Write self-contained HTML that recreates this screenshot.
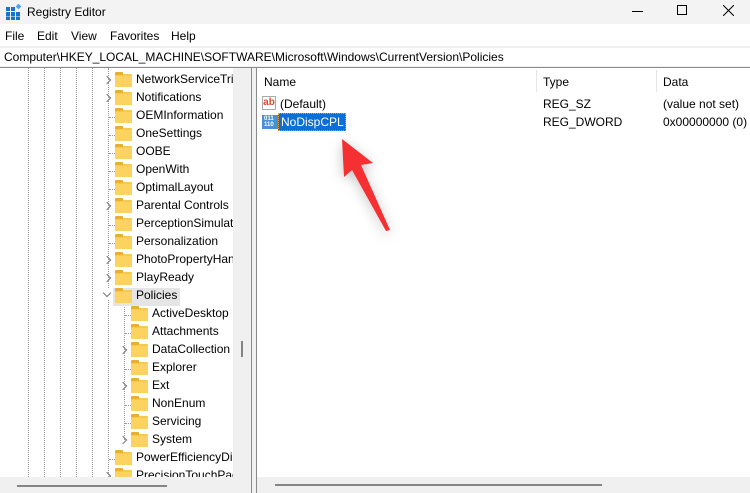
<!DOCTYPE html>
<html><head><style>
*{margin:0;padding:0;box-sizing:border-box}
body{width:750px;height:493px;overflow:hidden;background:#fff;font-family:"Liberation Sans",sans-serif;font-size:12px;color:#000;position:relative}
.abs{position:absolute}
.title{left:0;top:0;width:750px;height:24px;background:#f3f3f3}
.menu{left:0;top:24px;width:750px;height:22px;background:#fff}
.menu span{position:absolute;top:5px;font-size:12px}
.addr{left:0;top:46px;width:750px;height:22px;background:#f0f0f0;border-bottom:1px solid #8a8a8a}
.addrin{left:0;top:48px;width:750px;height:18px;background:#fff;font-size:12px;padding:2px 0 0 4px;white-space:nowrap}
.row{position:absolute;height:18px;white-space:nowrap;font-size:12px}
.fold{position:absolute;width:17px;height:13px;top:3px;background:#f8c94a;border-radius:1px}
.fold:before{content:"";position:absolute;left:0;top:-2px;width:8px;height:3px;background:#e8b02e;border-radius:1px 1px 0 0}
.fold:after{content:"";position:absolute;left:0;top:2px;width:17px;height:11px;background:#fbd35e}
.dv{position:absolute;top:68px;height:409px;width:0;border-left:1px dotted #999}
.ch{position:absolute;width:6px;height:6px;border-right:1.3px solid #777;border-bottom:1.3px solid #777;transform:rotate(-45deg)}
.hd{position:absolute;height:0;border-top:1px dotted #999}
#tw{position:absolute;left:0;top:0;width:233px;height:477px;overflow:hidden}
#ti{position:absolute;left:0;top:2px;width:233px;height:480px}
</style></head><body>
<div class="abs title"></div>
<svg class="abs" style="left:6px;top:4px" width="16" height="16" viewBox="0 0 16 16">
<g fill="#1a73c8"><rect x="0" y="3" width="4" height="4"/><rect x="5" y="3" width="4" height="4"/><rect x="0" y="8" width="4" height="4"/><rect x="5" y="8" width="4" height="4"/><rect x="10" y="8" width="4" height="4"/><rect x="0" y="12.5" width="4" height="3.5"/><rect x="5" y="12.5" width="4" height="3.5"/><rect x="10" y="12.5" width="4" height="3.5"/></g>
<rect x="10.5" y="0.5" width="4" height="4" fill="#4ba3f0" transform="rotate(45 12.5 2.5)"/></svg>
<div class="abs" style="left:27px;top:5px;font-size:12px">Registry Editor</div>
<div class="abs" style="left:632px;top:11px;width:11px;height:1px;background:#000"></div>
<div class="abs" style="left:677px;top:5px;width:10px;height:10px;border:1px solid #000"></div>
<svg class="abs" style="left:723px;top:5px" width="11" height="11"><path d="M0 0L11 11M11 0L0 11" stroke="#000" stroke-width="1"/></svg>
<div class="abs menu"><span style="left:5px">File</span><span style="left:37px">Edit</span><span style="left:71px">View</span><span style="left:110px">Favorites</span><span style="left:171px">Help</span></div>
<div class="abs addr"></div>
<div class="abs addrin">Computer\HKEY_LOCAL_MACHINE\SOFTWARE\Microsoft\Windows\CurrentVersion\Policies</div>
<div class="dv" style="left:28px"></div><div class="dv" style="left:44px"></div><div class="dv" style="left:60px"></div><div class="dv" style="left:76px"></div><div class="dv" style="left:92px"></div>
<div id="tw"><div id="ti">
<div class="dv" style="left:108px;top:66px;height:220px"></div>
<div class="dv" style="left:108px;top:298px;height:177px"></div>
<div class="dv" style="left:124px;top:302px;height:136px"></div>
<div class="ch" style="left:104px;top:75px"></div><div class="fold" style="left:115px;top:72px"></div><div class="row" style="left:136px;top:70px">NetworkServiceTrig</div>
<div class="ch" style="left:104px;top:93px"></div><div class="fold" style="left:115px;top:90px"></div><div class="row" style="left:136px;top:88px">Notifications</div>
<div class="hd" style="left:109px;top:115px;width:6px"></div><div class="fold" style="left:115px;top:108px"></div><div class="row" style="left:136px;top:106px">OEMInformation</div>
<div class="hd" style="left:109px;top:133px;width:6px"></div><div class="fold" style="left:115px;top:126px"></div><div class="row" style="left:136px;top:124px">OneSettings</div>
<div class="hd" style="left:109px;top:151px;width:6px"></div><div class="fold" style="left:115px;top:144px"></div><div class="row" style="left:136px;top:142px">OOBE</div>
<div class="hd" style="left:109px;top:169px;width:6px"></div><div class="fold" style="left:115px;top:162px"></div><div class="row" style="left:136px;top:160px">OpenWith</div>
<div class="hd" style="left:109px;top:187px;width:6px"></div><div class="fold" style="left:115px;top:180px"></div><div class="row" style="left:136px;top:178px">OptimalLayout</div>
<div class="ch" style="left:104px;top:201px"></div><div class="fold" style="left:115px;top:198px"></div><div class="row" style="left:136px;top:196px">Parental Controls</div>
<div class="hd" style="left:109px;top:223px;width:6px"></div><div class="fold" style="left:115px;top:216px"></div><div class="row" style="left:136px;top:214px">PerceptionSimulat</div>
<div class="hd" style="left:109px;top:241px;width:6px"></div><div class="fold" style="left:115px;top:234px"></div><div class="row" style="left:136px;top:232px">Personalization</div>
<div class="ch" style="left:104px;top:255px"></div><div class="fold" style="left:115px;top:252px"></div><div class="row" style="left:136px;top:250px">PhotoPropertyHan</div>
<div class="ch" style="left:104px;top:273px"></div><div class="fold" style="left:115px;top:270px"></div><div class="row" style="left:136px;top:268px">PlayReady</div>
<div class="abs" style="left:113px;top:286px;width:67px;height:18px;background:#e5e5e5"></div>
<div class="ch" style="left:104px;top:288px;transform:rotate(45deg)"></div><div class="fold" style="left:115px;top:288px"></div><div class="row" style="left:136px;top:286px">Policies</div>
<div class="hd" style="left:125px;top:313px;width:6px"></div><div class="fold" style="left:131px;top:306px"></div><div class="row" style="left:152px;top:304px">ActiveDesktop</div>
<div class="hd" style="left:125px;top:331px;width:6px"></div><div class="fold" style="left:131px;top:324px"></div><div class="row" style="left:152px;top:322px">Attachments</div>
<div class="ch" style="left:120px;top:345px"></div><div class="fold" style="left:131px;top:342px"></div><div class="row" style="left:152px;top:340px">DataCollection</div>
<div class="hd" style="left:125px;top:367px;width:6px"></div><div class="fold" style="left:131px;top:360px"></div><div class="row" style="left:152px;top:358px">Explorer</div>
<div class="ch" style="left:120px;top:381px"></div><div class="fold" style="left:131px;top:378px"></div><div class="row" style="left:152px;top:376px">Ext</div>
<div class="hd" style="left:125px;top:403px;width:6px"></div><div class="fold" style="left:131px;top:396px"></div><div class="row" style="left:152px;top:394px">NonEnum</div>
<div class="hd" style="left:125px;top:421px;width:6px"></div><div class="fold" style="left:131px;top:414px"></div><div class="row" style="left:152px;top:412px">Servicing</div>
<div class="ch" style="left:120px;top:435px"></div><div class="fold" style="left:131px;top:432px"></div><div class="row" style="left:152px;top:430px">System</div>
<div class="hd" style="left:109px;top:457px;width:6px"></div><div class="fold" style="left:115px;top:450px"></div><div class="row" style="left:136px;top:448px">PowerEfficiencyDia</div>
<div class="ch" style="left:104px;top:471px"></div><div class="fold" style="left:115px;top:468px"></div><div class="row" style="left:136px;top:466px">PrecisionTouchPad</div>
</div></div>
<div class="abs" style="left:233px;top:68px;width:17px;height:425px;background:#f0f0f0"></div>
<div class="abs" style="left:241px;top:341px;width:2px;height:16px;background:#858585"></div>
<div class="abs" style="left:0;top:477px;width:250px;height:16px;background:#f0f0f0"></div>
<div class="abs" style="left:17px;top:485px;width:150px;height:2px;background:#858585"></div>
<div class="abs" style="left:250px;top:68px;width:7px;height:425px;background:#f0f0f0"></div>
<div class="abs" style="left:251px;top:68px;width:1px;height:425px;background:#8a8a8a"></div>
<div class="abs" style="left:256px;top:68px;width:1px;height:425px;background:#8a8a8a"></div>
<div class="abs" style="left:264px;top:75px">Name</div>
<div class="abs" style="left:536px;top:70px;width:1px;height:22px;background:#e5e5e5"></div>
<div class="abs" style="left:543px;top:75px">Type</div>
<div class="abs" style="left:656px;top:70px;width:1px;height:22px;background:#e5e5e5"></div>
<div class="abs" style="left:663px;top:75px">Data</div>
<div class="abs" style="left:262px;top:96px;width:14px;height:14px;border:1px solid #aaa;background:#fff;font-size:10px;font-weight:bold;color:#d84c2a;line-height:11px;text-align:center">ab</div>
<div class="abs" style="left:280px;top:97px">(Default)</div>
<div class="abs" style="left:543px;top:97px">REG_SZ</div>
<div class="abs" style="left:663px;top:97px">(value not set)</div>
<div class="abs" style="left:262px;top:115px;width:16px;height:14px;background:#4a8fd8;color:#fff;font-size:6px;line-height:6px;padding:1px 0 0 2px;font-weight:bold">011<br>110</div>
<div class="abs" style="left:278px;top:113px;width:68px;height:18px;background:#0b6fd6;border:1px dotted #e8a040"></div>
<div class="abs" style="left:281px;top:115px;color:#fff">NoDispCPL</div>
<div class="abs" style="left:543px;top:115px">REG_DWORD</div>
<div class="abs" style="left:663px;top:115px">0x00000000 (0)</div>
<div class="abs" style="left:257px;top:477px;width:493px;height:16px;background:#f0f0f0"></div>
<div class="abs" style="left:275px;top:484px;width:327px;height:2px;background:#858585"></div>
<svg class="abs" style="left:0;top:0;filter:drop-shadow(0 3px 6px rgba(0,0,0,.25))" width="750" height="493">
<path d="M342 139L373 163L361 165L390 230L386 231L352 170L344 177Z" fill="#f52f32"/>
</svg>
</body></html>
